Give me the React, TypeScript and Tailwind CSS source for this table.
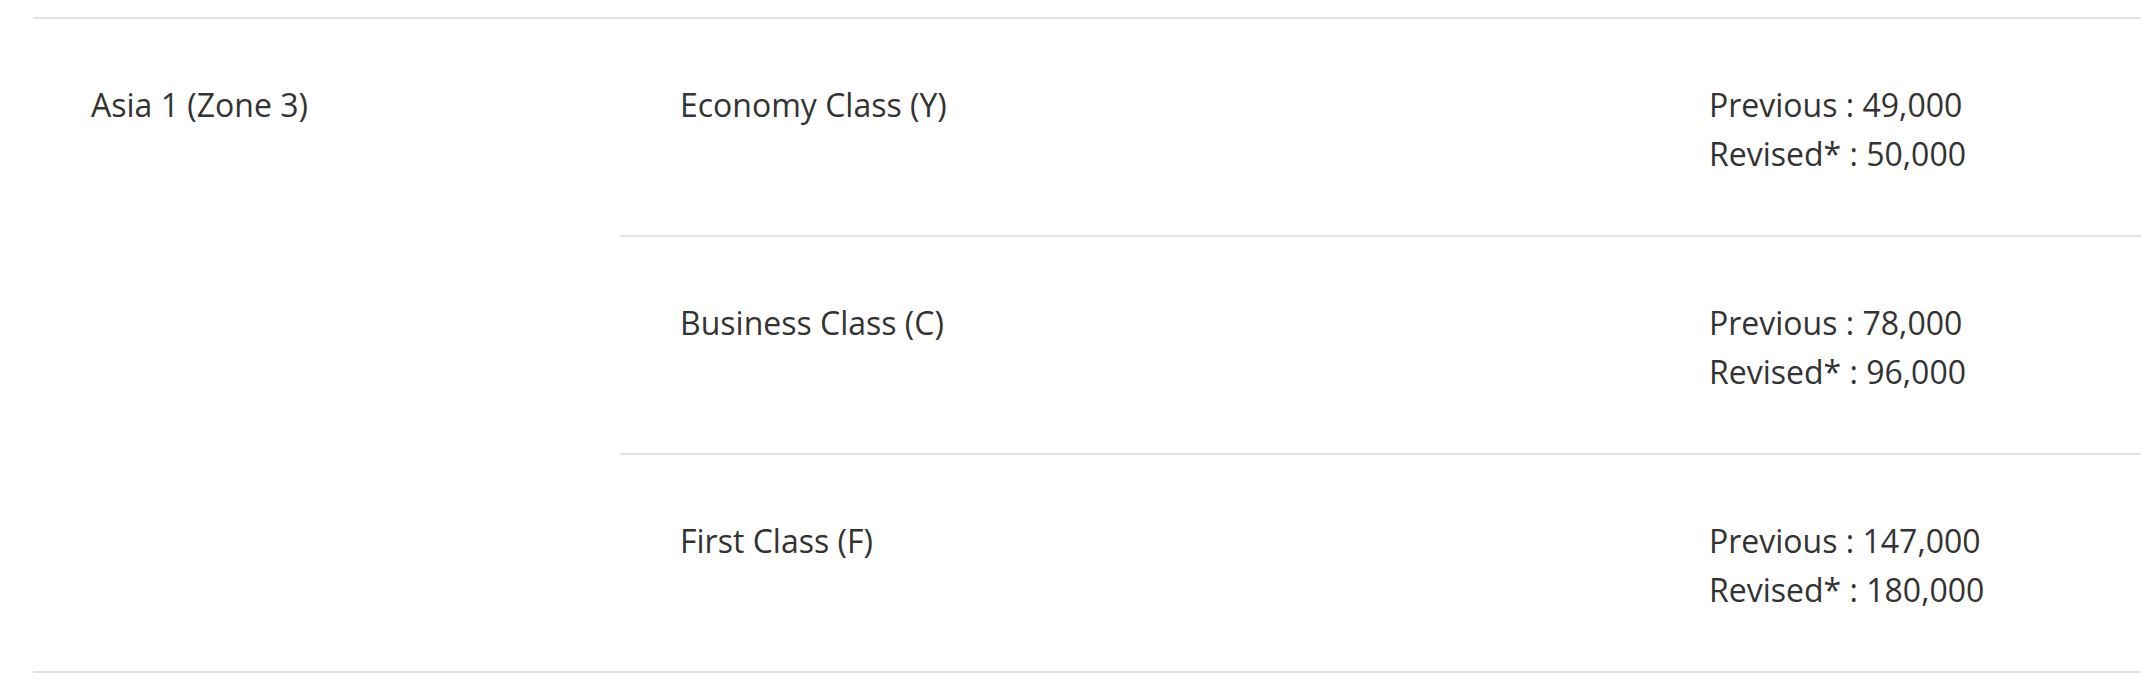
import React from 'react';

const fares = [
  { cabin: 'Economy Class (Y)', previous: '49,000', revised: '50,000' },
  { cabin: 'Business Class (C)', previous: '78,000', revised: '96,000' },
  { cabin: 'First Class (F)', previous: '147,000', revised: '180,000' },
];

export default function App() {
  return (
    <div className="min-h-screen bg-white pt-[17px] text-[#333333] font-['Open_Sans','Noto_Sans',sans-serif] text-[32px] leading-[49px]">
      <div className="ml-[33px] flex border-y-2 border-[#e2e2e2]">
        <div className="w-[587px] shrink-0 pl-[58px] pt-[61px]">Asia 1 (Zone 3)</div>
        <div className="flex-1">
          {fares.map((fare, idx) => (
            <div
              key={fare.cabin}
              className={`flex pt-[61px] pb-[57px] ${idx < fares.length - 1 ? 'border-b-2 border-[#e2e2e2]' : ''}`}
            >
              <div className="w-[1089px] shrink-0 pl-[60px]">{fare.cabin}</div>
              <div className="flex-1">
                <div>Previous : {fare.previous}</div>
                <div>Revised* : {fare.revised}</div>
              </div>
            </div>
          ))}
        </div>
      </div>
    </div>
  );
}
